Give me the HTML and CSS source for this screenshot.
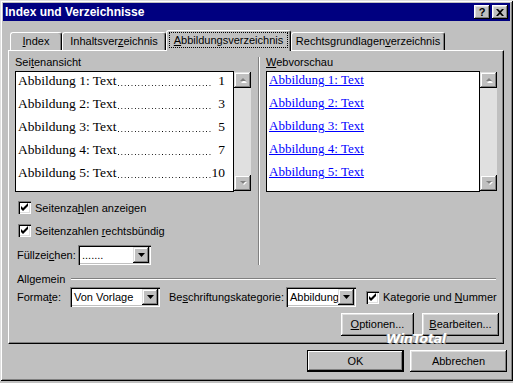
FILE: index.html
```html
<!DOCTYPE html>
<html>
<head>
    <meta charset="utf-8">
    <title>Index und Verzeichnisse</title>
    <link rel="stylesheet" href="styles.css">
</head>
<body>
    <div class="window">
        <div class="titlebar">
            <span class="title">Index und Verzeichnisse</span>
            <div class="title-buttons">
                <span class="title-btn help">?</span>
                <span class="title-btn close">
                    <svg width="8" height="7" viewBox="0 0 8 7"><path d="M0 0h2l2 2 2-2h2L5 3.5 8 7H6L4 5 2 7H0l3-3.5z" fill="#000"/></svg>
                </span>
            </div>
        </div>

        <div class="tabs">
            <div class="tab tab-index"><u>I</u>ndex</div>
            <div class="tab tab-inhalt">Inhaltsver<u>z</u>eichnis</div>
            <div class="tab tab-abb selected"><span class="focus"><u>A</u>bbildungsverzeichnis</span></div>
            <div class="tab tab-recht">Rechtsgrundlagen<u>v</u>erzeichnis</div>
        </div>

        <div class="panel">
            <div class="columns">
                <div class="col-left">
                    <div class="group-label">Sei<u>t</u>enansicht</div>
                    <div class="listbox-wrap">
                        <div class="listbox">
                            <div class="entry"><span>Abbildung 1: Text</span><span class="leader"></span><span class="page">1</span></div>
                            <div class="entry"><span>Abbildung 2: Text</span><span class="leader"></span><span class="page">3</span></div>
                            <div class="entry"><span>Abbildung 3: Text</span><span class="leader"></span><span class="page">5</span></div>
                            <div class="entry"><span>Abbildung 4: Text</span><span class="leader"></span><span class="page">7</span></div>
                            <div class="entry"><span>Abbildung 5: Text</span><span class="leader"></span><span class="page">10</span></div>
                        </div>
                        <div class="scrollbar">
                            <div class="scroll-btn"><svg width="8" height="5" viewBox="0 0 8 5"><path d="M4 1 7 4H1z" fill="#fff" transform="translate(1 1)"/><path d="M4 0 7 3H1z" fill="#808080"/></svg></div>
                            <div class="scroll-track"></div>
                            <div class="scroll-btn"><svg width="8" height="5" viewBox="0 0 8 5"><path d="M1 0h6L4 3z" fill="#fff" transform="translate(1 1)"/><path d="M1 0h6L4 3z" fill="#808080"/></svg></div>
                        </div>
                    </div>

                    <div class="check-row first">
                        <span class="checkbox"><svg width="9" height="9" viewBox="0 0 9 9"><path d="M1 3v3l2 2 5-5V0L3 5z" fill="#000"/></svg></span>
                        <span>Seitenza<u>h</u>len anzeigen</span>
                    </div>
                    <div class="check-row">
                        <span class="checkbox"><svg width="9" height="9" viewBox="0 0 9 9"><path d="M1 3v3l2 2 5-5V0L3 5z" fill="#000"/></svg></span>
                        <span>Seitenzahlen <u>r</u>echtsbündig</span>
                    </div>

                    <div class="field-row fill-row">
                        <span class="fill-label">Füllzei<u>c</u>hen:</span>
                        <div class="combo combo-fill">
                            <span class="combo-value">.......</span>
                            <span class="combo-btn"><svg width="7" height="4" viewBox="0 0 7 4"><path d="M0 0h7L3.5 4z" fill="#000"/></svg></span>
                        </div>
                    </div>
                </div>

                <div class="separator"></div>

                <div class="col-right">
                    <div class="group-label"><u>W</u>ebvorschau</div>
                    <div class="listbox-wrap">
                        <div class="listbox links">
                            <a href="#">Abbildung 1: Text</a>
                            <a href="#">Abbildung 2: Text</a>
                            <a href="#">Abbildung 3: Text</a>
                            <a href="#">Abbildung 4: Text</a>
                            <a href="#">Abbildung 5: Text</a>
                        </div>
                        <div class="scrollbar">
                            <div class="scroll-btn"><svg width="8" height="5" viewBox="0 0 8 5"><path d="M4 1 7 4H1z" fill="#fff" transform="translate(1 1)"/><path d="M4 0 7 3H1z" fill="#808080"/></svg></div>
                            <div class="scroll-track"></div>
                            <div class="scroll-btn"><svg width="8" height="5" viewBox="0 0 8 5"><path d="M1 0h6L4 3z" fill="#fff" transform="translate(1 1)"/><path d="M1 0h6L4 3z" fill="#808080"/></svg></div>
                        </div>
                    </div>
                </div>
            </div>

            <div class="section-head">
                <span>Allgemein</span>
                <span class="section-line"></span>
            </div>

            <div class="field-row general-row">
                <span class="format-label">Forma<u>t</u>e:</span>
                <div class="combo combo-format">
                    <span class="combo-value">Von Vorlage</span>
                    <span class="combo-btn"><svg width="7" height="4" viewBox="0 0 7 4"><path d="M0 0h7L3.5 4z" fill="#000"/></svg></span>
                </div>
                <span class="category-label">Be<u>s</u>chriftungskategorie:</span>
                <div class="combo combo-category">
                    <span class="combo-value">Abbildung</span>
                    <span class="combo-btn"><svg width="7" height="4" viewBox="0 0 7 4"><path d="M0 0h7L3.5 4z" fill="#000"/></svg></span>
                </div>
                <span class="checkbox category-check"><svg width="9" height="9" viewBox="0 0 9 9"><path d="M1 3v3l2 2 5-5V0L3 5z" fill="#000"/></svg></span>
                <span>Kategorie und <u>N</u>ummer</span>
            </div>

            <div class="panel-buttons">
                <div class="button btn-options"><u>O</u>ptionen...</div>
                <div class="button btn-edit"><u>B</u>earbeiten...</div>
            </div>
        </div>

        <div class="dialog-buttons">
            <div class="button default">OK</div>
            <div class="button">Abbrechen</div>
        </div>

        <span class="watermark">WinTotal</span>
    </div>
</body>
</html>
```

FILE: styles.css
```css
body {
    margin: 0;
    background-color: #c0c0c0;
    font-family: 'Liberation Sans', Arial, sans-serif;
    font-size: 11px;
    color: #000;
}

u {
    text-decoration: underline;
    text-underline-offset: 1px;
}

.window {
    position: relative;
    box-sizing: border-box;
    width: 513px;
    height: 381px;
    padding: 3px;
    background-color: #c0c0c0;
    box-shadow: inset 1px 1px #dfdfdf, inset -1px -1px #000, inset 2px 2px #fff, inset -2px -2px #808080;
}

/* title bar */
.titlebar {
    height: 18px;
    background-color: #000080;
    display: flex;
    align-items: center;
    justify-content: space-between;
    padding: 0 2px 0 2px;
}

.title {
    color: #fff;
    font-weight: bold;
    font-size: 12px;
}

.title-buttons {
    display: flex;
    gap: 2px;
}

.title-btn {
    box-sizing: border-box;
    width: 16px;
    height: 14px;
    background-color: #c0c0c0;
    box-shadow: inset -1px -1px #000, inset 1px 1px #fff, inset -2px -2px #808080, inset 2px 2px #dfdfdf;
    display: flex;
    align-items: center;
    justify-content: center;
    font-weight: bold;
    font-size: 11px;
    line-height: 14px;
}

/* tabs */
.tabs {
    display: flex;
    align-items: flex-end;
    height: 20px;
    margin-top: 9px;
    padding-left: 7px;
}

.tab {
    box-sizing: border-box;
    height: 18px;
    border-top: 1px solid #fff;
    border-left: 1px solid #fff;
    border-right: 1px solid #000;
    border-radius: 3px 3px 0 0;
    box-shadow: inset -1px 0 #808080;
    background-color: #c0c0c0;
    text-align: center;
    line-height: 17px;
}

.tab.selected {
    position: relative;
    z-index: 1;
    height: 21px;
    margin-bottom: -1px;
    line-height: 19px;
}

.tab-index { width: 52px; }
.tab-inhalt { width: 104px; }
.tab-abb { width: 125px; }
.tab-recht { width: 154px; }

.focus {
    outline: 1px dotted #000;
    outline-offset: 0;
    padding: 1px 4px;
}

/* panel */
.panel {
    box-sizing: border-box;
    width: 496px;
    height: 294px;
    margin-left: 5px;
    padding: 5px 4px 0 6px;
    border-top: 1px solid #fff;
    border-left: 1px solid #fff;
    border-right: 1px solid #000;
    border-bottom: 1px solid #000;
    box-shadow: inset -1px -1px #808080;
}

.columns {
    display: flex;
}

.col-left {
    width: 236px;
}

.col-right {
    flex: 1;
    padding-right: 2px;
}

.separator {
    box-sizing: border-box;
    width: 2px;
    margin: 1px 6px 0 7px;
    border-left: 1px solid #808080;
    border-right: 1px solid #fff;
}

.group-label {
    height: 13px;
    line-height: 13px;
    margin-bottom: 2px;
}

.listbox-wrap {
    display: flex;
    height: 121px;
}

.listbox {
    flex: 1;
    box-sizing: border-box;
    background-color: #fff;
    border: 1px solid #000;
    padding: 0 8px 0 2px;
    font-family: 'Liberation Serif', 'Times New Roman', serif;
    font-size: 13.5px;
    overflow: hidden;
}

.entry {
    display: flex;
    height: 18px;
    line-height: 18px;
    margin-bottom: 5px;
    white-space: nowrap;
}

/* dot leader drawn as a repeating 1px dot */
.leader {
    flex: 1;
    margin-left: 1px;
    background-image: linear-gradient(90deg, #000 1px, transparent 1px);
    background-size: 3.4px 1px;
    background-repeat: repeat-x;
    background-position: left 13px;
}

.page {
    width: 14px;
    text-align: right;
}

.links {
    font-size: 13px;
}

.links a {
    display: block;
    width: max-content;
    height: 16px;
    line-height: 16px;
    margin-bottom: 7px;
    color: #0000ff;
    text-decoration: underline;
}

.scrollbar {
    width: 17px;
    margin: 1px 0;
    display: flex;
    flex-direction: column;
}

.scroll-btn {
    box-sizing: border-box;
    height: 16px;
    background-color: #c0c0c0;
    box-shadow: inset -1px -1px #000, inset 1px 1px #dfdfdf, inset -2px -2px #808080, inset 2px 2px #fff;
    display: flex;
    align-items: center;
    justify-content: center;
}

.scroll-track {
    flex: 1;
    background-color: #e0e0e0;
}

/* checkboxes */
.check-row {
    display: flex;
    align-items: center;
    height: 15px;
    margin-top: 8px;
}

.checkbox {
    box-sizing: border-box;
    width: 13px;
    height: 13px;
    margin: 0 4px 0 3px;
    background-color: #fff;
    box-shadow: inset 1px 1px #808080, inset 2px 2px #000, inset -1px -1px #fff, inset -2px -2px #dfdfdf;
    display: flex;
    align-items: center;
    justify-content: center;
    flex-shrink: 0;
}

/* fields */
.field-row {
    display: flex;
    align-items: center;
    height: 20px;
    padding-left: 2px;
}

.fill-row {
    margin-top: 7px;
}

.fill-label {
    width: 61px;
}

.combo {
    box-sizing: border-box;
    height: 20px;
    background-color: #fff;
    box-shadow: inset 1px 1px #808080, inset 2px 2px #000, inset -1px -1px #fff, inset -2px -2px #c0c0c0;
    display: flex;
    align-items: center;
    padding: 2px;
}

.combo-value {
    flex: 1;
    padding-left: 2px;
    white-space: nowrap;
    overflow: hidden;
}

.combo-btn {
    box-sizing: border-box;
    width: 16px;
    height: 16px;
    background-color: #c0c0c0;
    box-shadow: inset -1px -1px #000, inset 1px 1px #dfdfdf, inset -2px -2px #808080, inset 2px 2px #fff;
    display: flex;
    align-items: center;
    justify-content: center;
}

.combo-fill { width: 73px; }
.combo-format { width: 90px; }
.combo-category { width: 70px; }

.section-head {
    display: flex;
    align-items: center;
    height: 13px;
    margin-top: 7px;
    padding-left: 2px;
}

.section-line {
    flex: 1;
    margin: 0 3px 0 6px;
    border-top: 1px solid #808080;
    border-bottom: 1px solid #fff;
}

.general-row {
    margin-top: 2px;
}

.format-label {
    width: 53px;
}

.category-label {
    width: 117px;
    margin-left: 9px;
}

.category-check {
    margin-left: 10px;
}

/* buttons */
.button {
    box-sizing: border-box;
    height: 23px;
    line-height: 23px;
    text-align: center;
    background-color: #c0c0c0;
    box-shadow: inset -1px -1px #000, inset 1px 1px #fff, inset -2px -2px #808080, inset 2px 2px #dfdfdf;
}

.panel-buttons {
    display: flex;
    justify-content: flex-end;
    gap: 8px;
    margin-top: 6px;
}

.btn-options { width: 73px; }
.btn-edit { width: 77px; }

.dialog-buttons {
    display: flex;
    justify-content: flex-end;
    gap: 6px;
    margin-top: 6px;
    padding-right: 3px;
}

.dialog-buttons .button {
    width: 97px;
    height: 22px;
    line-height: 22px;
}

.button.default {
    box-shadow: inset 0 0 0 1px #000, inset -2px -2px #000, inset 2px 2px #fff, inset -3px -3px #808080;
}

.watermark {
    position: absolute;
    left: 386px;
    top: 331px;
    font-family: 'DejaVu Sans', sans-serif;
    font-size: 13px;
    font-weight: bold;
    font-style: italic;
    letter-spacing: -0.5px;
    color: #fff;
    text-shadow: 1px 1px 0 #8a8a8a, -1px 0 0 #9a9a9a;
}
```
